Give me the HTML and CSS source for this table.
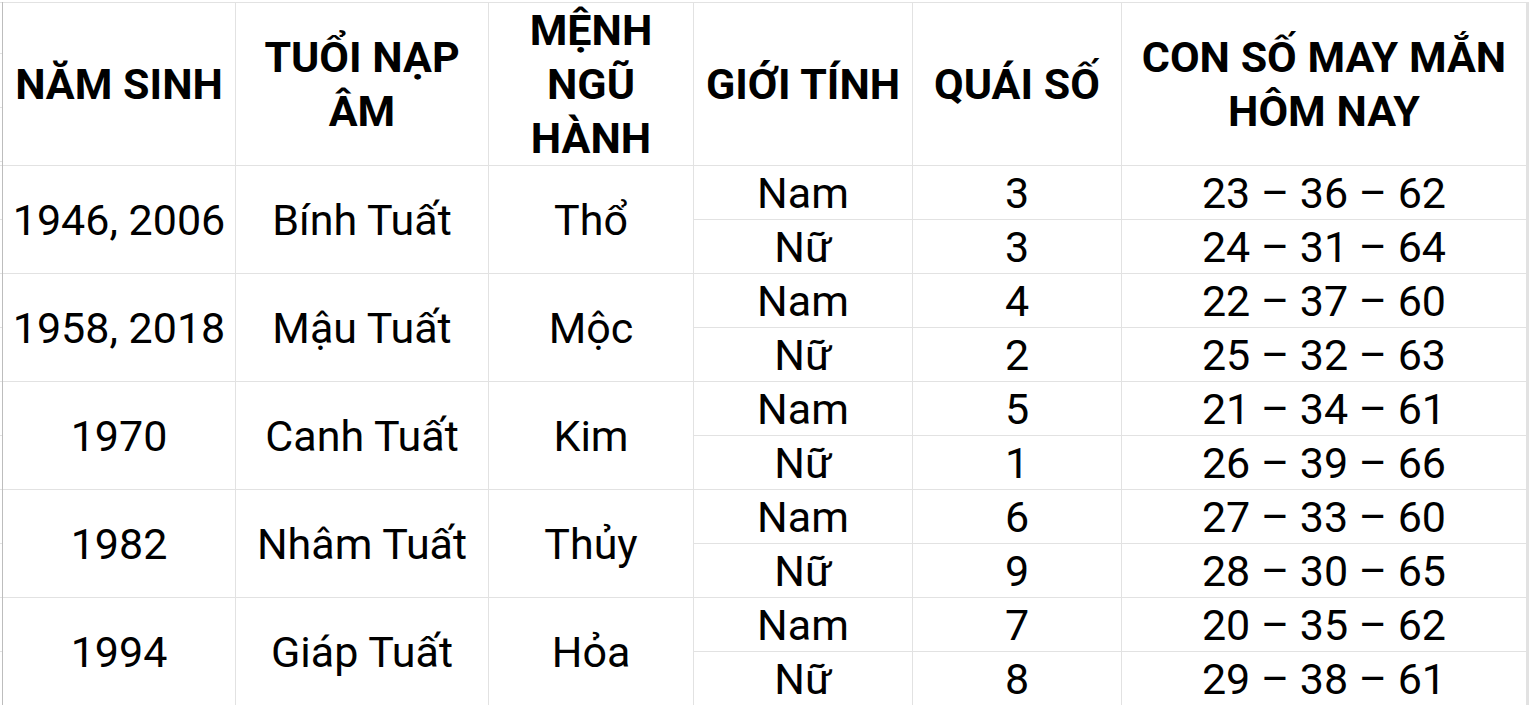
FILE: index.html
```html
<!DOCTYPE html>
<html lang="vi">
<head>
<meta charset="utf-8">
<title>Con số may mắn tuổi Tuất</title>
<link rel="stylesheet" href="styles.css">
</head>
<body>
<div class="sheet">
  <div class="cell head">NĂM SINH</div>
  <div class="cell head">TUỔI NẠP<br>ÂM</div>
  <div class="cell head">MỆNH<br>NGŨ<br>HÀNH</div>
  <div class="cell head">GIỚI TÍNH</div>
  <div class="cell head">QUÁI SỐ</div>
  <div class="cell head">CON SỐ MAY MẮN<br>HÔM NAY</div>

  <div class="cell merged">1946, 2006</div>
  <div class="cell merged">Bính Tuất</div>
  <div class="cell merged">Thổ</div>
  <div class="cell">Nam</div><div class="cell">3</div><div class="cell">23 – 36 – 62</div>
  <div class="cell">Nữ</div><div class="cell">3</div><div class="cell">24 – 31 – 64</div>

  <div class="cell merged">1958, 2018</div>
  <div class="cell merged">Mậu Tuất</div>
  <div class="cell merged">Mộc</div>
  <div class="cell">Nam</div><div class="cell">4</div><div class="cell">22 – 37 – 60</div>
  <div class="cell">Nữ</div><div class="cell">2</div><div class="cell">25 – 32 – 63</div>

  <div class="cell merged">1970</div>
  <div class="cell merged">Canh Tuất</div>
  <div class="cell merged">Kim</div>
  <div class="cell">Nam</div><div class="cell">5</div><div class="cell">21 – 34 – 61</div>
  <div class="cell">Nữ</div><div class="cell">1</div><div class="cell">26 – 39 – 66</div>

  <div class="cell merged">1982</div>
  <div class="cell merged">Nhâm Tuất</div>
  <div class="cell merged">Thủy</div>
  <div class="cell">Nam</div><div class="cell">6</div><div class="cell">27 – 33 – 60</div>
  <div class="cell">Nữ</div><div class="cell">9</div><div class="cell">28 – 30 – 65</div>

  <div class="cell merged">1994</div>
  <div class="cell merged">Giáp Tuất</div>
  <div class="cell merged">Hỏa</div>
  <div class="cell">Nam</div><div class="cell">7</div><div class="cell">20 – 35 – 62</div>
  <div class="cell">Nữ</div><div class="cell">8</div><div class="cell">29 – 38 – 61</div>
</div>
</body>
</html>
```

FILE: styles.css
```css
html, body {
  margin: 0;
  padding: 0;
  overflow: hidden;
}

body {
  background-color: #ffffff;
  background-image:
    linear-gradient(to bottom, transparent 2px, #e2e2e2 2px, #e2e2e2 3px, transparent 3px),
    repeating-linear-gradient(to bottom, #e2e2e2 0, #e2e2e2 1px, transparent 1px, transparent 54px);
  background-repeat: no-repeat, repeat;
  background-position: 0 0, 0 165px;
  font-family: Roboto, "Noto Sans", "DejaVu Sans", sans-serif;
  color: #000000;
}

.sheet {
  margin: 2px 0 0 2px;
  width: 1525px;
  display: grid;
  grid-template-columns: 232px 252px 204px 218px 208px 404px;
  grid-template-rows: 162px repeat(10, 53px);
  gap: 1px;
  padding: 1px 1px 1px 0;
  border-left: 1px solid #bdbdbd;
  background: #e2e2e2;
}

.cell {
  background: #ffffff;
  display: flex;
  align-items: center;
  justify-content: center;
  text-align: center;
  font-size: 43px;
  white-space: nowrap;
}

.head {
  font-weight: 700;
  line-height: 54px;
}

.merged {
  grid-row: span 2;
}
```
